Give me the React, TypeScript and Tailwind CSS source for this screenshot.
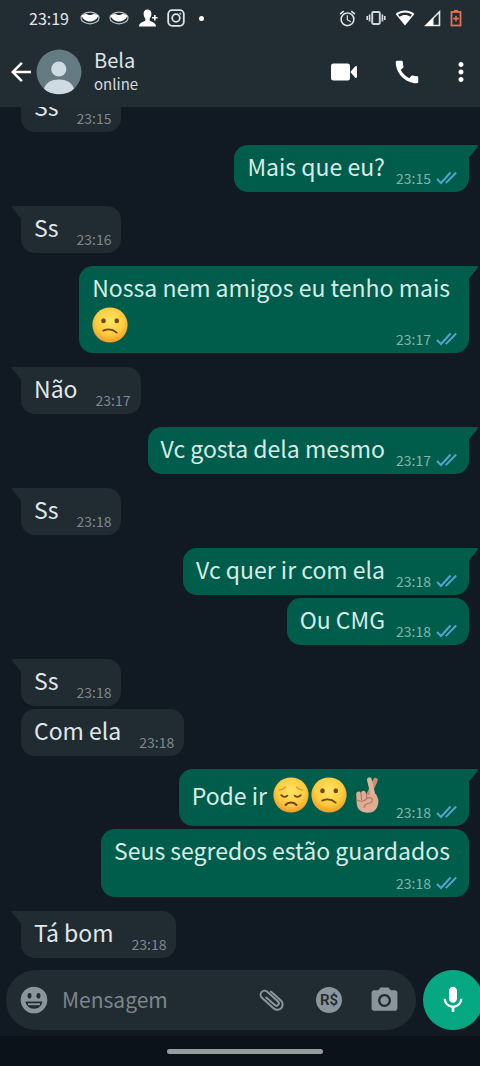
import type { ReactNode } from "react";
import { MdAlarm, MdArrowBack, MdCall, MdCameraAlt, MdMic, MdMoreVert } from "react-icons/md";

type Emoji = "confused" | "sad" | "fingers";

type Line = {
  text?: string;
  emojis?: Emoji[];
};

type Message = {
  lines: Line[];
  time: string;
  mine?: boolean;
  // first bubble of a run from the same sender carries the tail
  first?: boolean;
};

const MESSAGES: Message[] = [
  { lines: [{ text: "Ss" }], time: "23:15", first: true },
  { lines: [{ text: "Mais que eu?" }], time: "23:15", mine: true, first: true },
  { lines: [{ text: "Ss" }], time: "23:16", first: true },
  {
    lines: [{ text: "Nossa nem amigos eu tenho mais" }, { emojis: ["confused"] }],
    time: "23:17",
    mine: true,
    first: true,
  },
  { lines: [{ text: "Não" }], time: "23:17", first: true },
  { lines: [{ text: "Vc gosta dela mesmo" }], time: "23:17", mine: true, first: true },
  { lines: [{ text: "Ss" }], time: "23:18", first: true },
  { lines: [{ text: "Vc quer ir com ela" }], time: "23:18", mine: true, first: true },
  { lines: [{ text: "Ou CMG" }], time: "23:18", mine: true },
  { lines: [{ text: "Ss" }], time: "23:18", first: true },
  { lines: [{ text: "Com ela" }], time: "23:18" },
  {
    lines: [{ text: "Pode ir", emojis: ["sad", "confused", "fingers"] }],
    time: "23:18",
    mine: true,
    first: true,
  },
  { lines: [{ text: "Seus segredos estão guardados" }, {}], time: "23:18", mine: true },
  { lines: [{ text: "Tá bom" }], time: "23:18", first: true },
];

function Face({ label, children }: { label: string; children: ReactNode }) {
  return (
    <svg viewBox="0 0 36 36" role="img" aria-label={label} className="size-9 shrink-0">
      <defs>
        <radialGradient id="face" cx="50%" cy="38%" r="62%">
          <stop offset="0" stopColor="#ffe464" />
          <stop offset="0.65" stopColor="#fdcb3c" />
          <stop offset="1" stopColor="#ee9a2b" />
        </radialGradient>
      </defs>
      <circle cx="18" cy="18" r="17.6" fill="url(#face)" />
      {children}
    </svg>
  );
}

function EmojiGlyph({ name }: { name: Emoji }) {
  if (name === "confused") {
    return (
      <Face label="😕">
        <ellipse cx="11.5" cy="13.8" rx="2.3" ry="2.5" fill="#6b4a16" />
        <ellipse cx="24.8" cy="13.8" rx="2.3" ry="2.5" fill="#6b4a16" />
        <path d="M11.3 23.6c4.2-1.8 9.5-1.3 13.4 2" fill="none" stroke="#6b4012" strokeWidth="1.8" strokeLinecap="round" />
      </Face>
    );
  }
  if (name === "sad") {
    return (
      <Face label="😞">
        <path d="M6.2 13c2.6-.2 4.8-1.2 6.3-3M29.8 13c-2.6-.2-4.8-1.200-6.300-3" fill="none" stroke="#d9962c" strokeWidth="1.2" strokeLinecap="round" />
        <path d="M8.2 18.2c1.800 1.800 4.400 2 6.200.4M27.800 18.200c-1.800 1.800-4.400 2-6.200.4" fill="none" stroke="#6b4012" strokeWidth="1.8" strokeLinecap="round" />
        <path d="M12.5 28c2.6-3.200 8.400-3.200 11 0" fill="none" stroke="#6b4012" strokeWidth="2" strokeLinecap="round" />
      </Face>
    );
  }
  return (
    <svg viewBox="0 0 36 36" role="img" aria-label="🤞🏼" className="size-9 shrink-0">
      <path d="M26.500 3.200L18.600 20" stroke="#c98f76" strokeWidth="4.600" strokeLinecap="round" />
      <path d="M20.400 2.800L24.500 20" stroke="#e3b098" strokeWidth="4.800" strokeLinecap="round" />
      <path d="M7.200 17c0-3 4-3.400 4.800-.8.200-3.200 4.400-3.400 5 0l.6 2.300 9.200-1.500c3.200 4.500 3.200 9 1.200 13.500-1.600 3.500-5 5.200-9.500 5.200-6.500 0-10.300-3.200-10.800-9.200z" fill="#e0ac93" />
      <path d="M12 16.500l.5 6M17.300 17.500l.3 3.500M8 23c3.500 1.800 7.500 1.300 9.800-1.500 2-1.500 4.700-1 5.500 1.200.5 2.300-1.500 3.300-4.300 3.800-2 .5-3.500 1.800-4 3.800" fill="none" stroke="#b57b64" strokeWidth="1.200" strokeLinecap="round" />
    </svg>
  );
}

function Checks() {
  return (
    <svg viewBox="0 0 21 14" aria-label="Lida" className="h-[14px] w-[21px] shrink-0">
      <path d="M1 8l4 4L14.500 1.500M9.800 12.200L20.200 1.500" fill="none" stroke="#4fa6cf" strokeWidth="1.900" />
    </svg>
  );
}

function Tail({ mine }: { mine?: boolean }) {
  return mine ? (
    <svg viewBox="0 0 10 14" aria-hidden="true" className="absolute top-0 -right-[9px] h-[14px] w-[10px]">
      <path d="M0 0h8.500c1.300 0 1.800 1.200 1 2.200L1 12.500V14H0z" fill="#005d4b" />
    </svg>
  ) : (
    <svg viewBox="0 0 10 14" aria-hidden="true" className="absolute top-0 -left-[9px] h-[14px] w-[10px]">
      <path d="M10 0H1.500C.2 0-.3 1.200.5 2.200L9 12.500V14h1z" fill="#212b32" />
    </svg>
  );
}

function LineContent({ line }: { line: Line }) {
  return (
    <div className="flex items-center gap-[6px]">
      {line.text && <span className="whitespace-nowrap">{line.text}</span>}
      {line.emojis && (
        <span className={`flex gap-[2px] ${line.text ? "py-[5px]" : "py-[2px]"}`}>
          {line.emojis.map((e) => (
            <EmojiGlyph key={e} name={e} />
          ))}
        </span>
      )}
    </div>
  );
}

function Bubble({ message }: { message: Message }) {
  const { lines, time, mine, first } = message;
  const last = lines[lines.length - 1];
  const head = lines.slice(0, -1);

  const side = mine
    ? "self-end bg-[#005d4b] text-[#d5ebe6] pr-3"
    : "self-start bg-[#212b32] text-[#e0e7ea] pr-[10px]";
  const corner = !first ? "" : mine ? "rounded-tr-none" : "rounded-tl-none";
  const space = !first ? "mt-[3px]" : mine ? "mt-[13px]" : "mt-[14px]";

  return (
    <li className={`relative shrink-0 rounded-[14px] pl-[13px] pt-[3px] pb-1 text-[23px] leading-9 ${side} ${corner} ${space}`}>
      {first && <Tail mine={mine} />}
      {head.map((line, i) => (
        <div key={i} className="pr-[7px]">
          <LineContent line={line} />
        </div>
      ))}
      <div className={`flex items-end justify-between ${mine ? "gap-[11px]" : "gap-[18px]"}`}>
        <div className={last.text || last.emojis ? "pb-1" : "h-[25px]"}>
          <LineContent line={last} />
        </div>
        <div className={`flex items-center gap-[5px] text-[14px] leading-5 ${mine ? "text-[#83b5a9]" : "text-[#7f888d]"}`}>
          <time>{time}</time>
          {mine && <Checks />}
        </div>
      </div>
    </li>
  );
}

function MaskIcon() {
  return (
    <svg viewBox="0 0 20 14" aria-hidden="true" className="h-[14px] w-5">
      <ellipse cx="10" cy="7" rx="9" ry="5.800" fill="none" stroke="#b9c0c3" strokeWidth="1.200" />
      <path d="M1.500 4.500l4-1.500C7 2.600 8 4 10 4s3-1.400 4.500-1l4 1.500c-1.200 3.500-4.500 6-8.500 6s-7.300-2.500-8.500-6z" fill="#fff" />
    </svg>
  );
}

function StatusBar() {
  return (
    <div className="flex h-9 items-center justify-between pl-[29px] pr-[18px] text-white">
      <div className="flex items-center gap-[9px]">
        <span className="mr-[2px] text-[16px] leading-6 text-[#e3e7e9]">23:19</span>
        <MaskIcon />
        <MaskIcon />
        <svg viewBox="0 0 20 18" aria-hidden="true" className="h-[18px] w-5 fill-white">
          <path d="M9.500.5c-2.600 0-3.900 1.800-3.900 4.300 0 2 .8 3.600 1.700 4.700v2.200C4.500 13 1 13.800 1 17.500h17c0-3.700-3.500-4.500-6.300-5.800V9.500c1-1.100 1.700-2.700 1.700-4.700 0-2.500-1.300-4.300-3.900-4.300zM16 6v2h-2v1.600h2v2h1.600v-2h2V8h-2V6z" />
        </svg>
        <svg viewBox="0 0 18 18" aria-hidden="true" className="size-[18px] fill-none stroke-[#dfe3e5]">
          <rect x="1.200" y="1.200" width="15.600" height="15.600" rx="4" strokeWidth="1.800" />
          <circle cx="9" cy="9" r="3.800" strokeWidth="1.800" />
          <circle cx="13.200" cy="4.800" r=".6" />
        </svg>
        <span className="ml-[5px] size-[5px] rounded-full bg-white" />
      </div>
      <div className="flex items-center gap-[9px]">
        <MdAlarm className="size-[19px] text-[#dfe3e5]" />
        <svg viewBox="0 0 20 16" aria-hidden="true" className="h-4 w-5 stroke-[#d3d7d9]">
          <rect x="6.200" y="2" width="7.600" height="12" rx="1.200" fill="none" strokeWidth="1.900" />
          <path d="M3.600 4.500v7M1.200 6v4M16.400 4.500v7M18.800 6v4" strokeWidth="1.700" />
        </svg>
        <svg viewBox="0 0 20 16" aria-hidden="true" className="h-4 w-5">
          <path d="M10 .5C6 .5 3 1.800.6 3.900L10 15.500l9.400-11.600C17 1.800 14 .5 10 .5z" fill="#fff" />
          <path d="M3 4.600C7 1.700 13 1.700 17 4.600L15.300 6.700c-3-2.200-7.600-2.200-10.600 0z" fill="#222c33" />
        </svg>
        <svg viewBox="0 0 17 17" aria-hidden="true" className="size-[17px]">
          <path d="M1.800 15.500h13.700V1.800z" fill="none" stroke="#e8ebec" strokeWidth="1.600" />
          <path d="M1 16h8.500V7.500z" fill="#fff" />
        </svg>
        <svg viewBox="0 0 12 18" aria-hidden="true" className="h-[18px] w-3">
          <path d="M4 1h4v2H4z" fill="#e8714f" />
          <rect x="1.500" y="3" width="9" height="13.500" fill="none" stroke="#e8714f" strokeWidth="1.800" />
          <path d="M6 6.800v5.600M3.200 9.600h5.600" stroke="#e8714f" strokeWidth="1.600" />
        </svg>
      </div>
    </div>
  );
}

function ChatHeader() {
  return (
    <div className="flex h-[71px] items-center pl-[6px] pr-1 text-white">
      <button type="button" aria-label="Voltar" className="flex">
        <MdArrowBack className="size-[30px]" />
      </button>
      <svg viewBox="0 0 46 46" role="img" aria-label="Foto de Bela" className="size-[46px] shrink-0">
        <defs>
          <clipPath id="avatar">
            <circle cx="23" cy="23" r="22.500" />
          </clipPath>
        </defs>
        <circle cx="23" cy="23" r="22.500" fill="#647b84" />
        <g clipPath="url(#avatar)" fill="#cfdbe2">
          <circle cx="22.800" cy="20" r="7.600" />
          <path d="M7.500 42C9 33.500 15 30.500 22.800 30.500S37 33.500 38.500 42C33 46 13 46 7.500 42z" />
        </g>
      </svg>
      <div className="ml-3 flex-1 pb-[3px]">
        <h1 className="text-[20px] leading-7 text-[#dfe5e8]">Bela</h1>
        <p className="text-[15px] leading-5 text-[#d3dade]">online</p>
      </div>
      <button type="button" aria-label="Chamada de vídeo" className="flex">
        <svg viewBox="0 0 28 20" aria-hidden="true" className="h-5 w-7 fill-white">
          <rect x="1" y="1.500" width="19" height="17" rx="2.500" />
          <path d="M20.800 9.500L25 4.600c.8-.9 2-.6 2 .6v9.600c0 1.200-1.200 1.500-2 .6l-4.200-4.900z" />
        </svg>
      </button>
      <button type="button" aria-label="Ligar" className="ml-[34px] flex">
        <MdCall className="size-[30px]" />
      </button>
      <button type="button" aria-label="Mais opções" className="ml-[24px] flex">
        <MdMoreVert className="size-[30px]" />
      </button>
    </div>
  );
}

function Composer() {
  return (
    <form className="flex shrink-0 items-center gap-[7px] overflow-hidden pt-3 pb-[6px] pl-[6px]">
      <div className="flex h-[60px] min-w-0 flex-1 items-center rounded-full bg-[#212b32] pl-[14px] pr-4 text-[#8b969c]">
        <button type="button" aria-label="Emojis" className="flex">
          <svg viewBox="0 0 28 28" aria-hidden="true" className="size-7">
            <circle cx="14" cy="14" r="13.300" fill="currentColor" />
            <ellipse cx="9.500" cy="9.800" rx="2" ry="2.800" fill="#212b32" />
            <ellipse cx="18.500" cy="9.800" rx="2" ry="2.800" fill="#212b32" />
            <path d="M5.500 15.500h17c-.8 4.600-4 7.200-8.500 7.200s-7.700-2.600-8.500-7.200z" fill="#212b32" />
            <path d="M8 17.300h12v1.900H8z" fill="currentColor" />
          </svg>
        </button>
        <input
          type="text"
          aria-label="Mensagem"
          placeholder="Mensagem"
          className="ml-[14px] min-w-0 flex-1 bg-transparent pb-[3px] text-[21px] leading-8 text-[#e0e7ea] outline-none placeholder:text-[#7b868c]"
        />
        <button type="button" aria-label="Anexar" className="flex">
          <svg viewBox="0 0 28 28" aria-hidden="true" className="size-7 fill-none stroke-current">
            <path
              d="M19.500 7.500V21a5.300 5.300 0 0 1-10.600 0V5a4 4 0 0 1 8 0v14.500a2.400 2.400 0 0 1-4.800 0V8"
              transform="rotate(-48 14 14)"
              strokeWidth="2"
              strokeLinecap="round"
            />
          </svg>
        </button>
        <button type="button" aria-label="Pagamento" className="ml-[30px] flex size-[26px] items-center justify-center rounded-full bg-[#8b969c] font-['Roboto',sans-serif] text-[15px] leading-none font-semibold text-[#212b32]">
          R$
        </button>
        <button type="button" aria-label="Câmera" className="ml-[27px] flex">
          <MdCameraAlt className="size-[31px]" />
        </button>
      </div>
      <button type="button" aria-label="Gravar áudio" className="-mr-[3px] flex size-[60px] shrink-0 items-center justify-center rounded-full bg-[#06a884] text-white">
        <MdMic className="size-8" />
      </button>
    </form>
  );
}

export default function App() {
  return (
    <div className="flex h-screen flex-col overflow-hidden bg-[#111a22] font-['Noto_Sans_CJK_JP','Noto_Sans',sans-serif]">
      <header className="shrink-0 bg-[#222c33]">
        <StatusBar />
        <ChatHeader />
      </header>
      <main className="flex min-h-0 flex-1 flex-col justify-end overflow-hidden">
        <ul className="flex flex-col pl-[21px] pr-[11px]">
          {MESSAGES.map((message, i) => (
            <Bubble key={i} message={message} />
          ))}
        </ul>
      </main>
      <Composer />
      <div className="flex h-[30px] shrink-0 items-center justify-center bg-[#0b121a] pl-[10px]">
        <span className="h-[5px] w-1/3 rounded-full bg-[#979ca0]" />
      </div>
    </div>
  );
}
